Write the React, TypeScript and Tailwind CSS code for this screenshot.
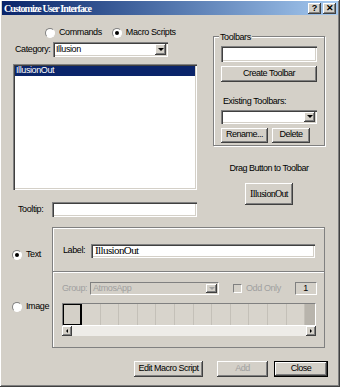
import type { ReactNode } from "react";

const FONT = { fontFamily: '"Liberation Sans", Arial, sans-serif' };
const SERIF = { fontFamily: '"Liberation Serif", "Times New Roman", serif' };

const sunken =
  "bg-white shadow-[inset_1px_1px_#808080,inset_2px_2px_#404040,inset_-1px_-1px_#ffffff,inset_-2px_-2px_#d4d0c8]";
const raised =
  "bg-[#d4d0c8] shadow-[inset_-1px_-1px_#404040,inset_1px_1px_#ffffff,inset_-2px_-2px_#808080]";

function Btn({
  children,
  className = "",
  disabled,
  isDefault,
}: {
  children: ReactNode;
  className?: string;
  disabled?: boolean;
  isDefault?: boolean;
}) {
  const inner = (
    <div
      className={`flex h-full w-full items-center justify-center whitespace-nowrap text-[9px] tracking-[-0.5px] ${raised} ${
        disabled ? "text-[#a0a0a0]" : "text-black"
      }`}
    >
      {children}
    </div>
  );
  if (isDefault) {
    return <div className={`border border-black ${className}`}>{inner}</div>;
  }
  return <div className={className}>{inner}</div>;
}

function Radio({ checked, label }: { checked?: boolean; label: string }) {
  return (
    <div className="flex items-center gap-[4px]">
      <div className="flex h-[10px] w-[10px] items-center justify-center rounded-full border border-[#808080] border-r-white border-b-white bg-white">
        {checked && <div className="h-[4px] w-[4px] rounded-full bg-black" />}
      </div>
      <span className="text-[9px] tracking-[-0.4px]">{label}</span>
    </div>
  );
}

function ComboArrow({ disabled }: { disabled?: boolean }) {
  return (
    <div className={`flex h-full w-[11px] items-center justify-center ${raised}`}>
      <div
        className={`h-0 w-0 border-x-[3px] border-t-[3px] border-x-transparent ${
          disabled ? "border-t-[#a0a0a0]" : "border-t-black"
        }`}
      />
    </div>
  );
}

function ScrollArrow({ dir }: { dir: "l" | "r" }) {
  return (
    <div className={`flex h-full w-[10px] items-center justify-center ${raised}`}>
      <div
        className={`h-0 w-0 border-y-[2px] border-y-transparent ${
          dir === "l" ? "border-r-[2px] border-r-black" : "border-l-[2px] border-l-black"
        }`}
      />
    </div>
  );
}

export default function App() {
  const cells = Array.from({ length: 12 });
  return (
    <div
      className="flex h-[387px] w-[340px] flex-col bg-[#d4d0c8] text-black shadow-[inset_-1px_-1px_#404040,inset_1px_1px_#ffffff,inset_-2px_-2px_#808080]"
      style={FONT}
    >
      {/* title bar */}
      <div className="mx-[2px] mt-[1px] flex h-[14px] items-center justify-between bg-gradient-to-r from-[#0a246a] to-[#a6caf0] pl-[2px] pr-[2px]">
        <span className="text-[10px] font-bold tracking-[-0.9px] text-white" style={SERIF}>
          Customize User Interface
        </span>
        <div className="flex gap-[2px]">
          <div className={`flex h-[11px] w-[13px] items-center justify-center text-[9px] font-bold leading-none ${raised}`}>
            ?
          </div>
          <div className={`flex h-[11px] w-[13px] items-center justify-center text-[9px] font-bold leading-none ${raised}`}>
            ✕
          </div>
        </div>
      </div>

      {/* top: two columns */}
      <div className="flex pl-[13px] pt-[12px]">
        <div className="flex w-[184px] flex-col">
          <div className="flex h-[12px] items-center gap-[10px] pl-[32px]">
            <Radio label="Commands" />
            <Radio checked label="Macro Scripts" />
          </div>
          <div className="mt-[3px] flex h-[15px] items-center">
            <span className="w-[40px] pl-[2px] text-[9px] tracking-[-0.4px]">Category:</span>
            <div className={`flex h-full w-[115px] items-center justify-between p-[2px] ${sunken}`}>
              <span className="pl-[1px] text-[9px] tracking-[-0.4px]">Illusion</span>
              <ComboArrow />
            </div>
          </div>
          <div className={`mt-[7px] h-[126px] p-[2px] ${sunken}`}>
            <div className="flex h-[10px] items-center bg-[#0a246a] pl-[1px] text-[9px] tracking-[-0.4px] text-white">
              IllusionOut
            </div>
          </div>
          <div className="mt-[12px] flex h-[15px] items-center">
            <span className="w-[39px] pl-[5px] text-[9px] tracking-[-0.4px]">Tooltip:</span>
            <div className={`h-full flex-1 ${sunken}`} />
          </div>
        </div>

        <div className="ml-[16px] flex w-[112px] flex-col">
          <div className="relative mt-[9px] h-[110px] border border-[#808080] shadow-[inset_1px_1px_#ffffff,1px_1px_#ffffff] px-[7px] pt-[9px]">
            <span className="absolute -top-[6px] left-[5px] bg-[#d4d0c8] px-[1px] text-[9px] tracking-[-0.4px]">
              Toolbars
            </span>
            <div className={`h-[16px] w-full ${sunken}`} />
            <Btn className="mt-[4px] h-[16px] w-full">Create Toolbar</Btn>
            <div className="mt-[13px] pl-[2px] text-[9px] tracking-[-0.4px]">Existing Toolbars:</div>
            <div className={`mt-[1px] flex h-[14px] w-full justify-end p-[2px] ${sunken}`}>
              <ComboArrow />
            </div>
            <div className="mt-[4px] flex gap-[4px]">
              <Btn className="h-[15px] w-[47px]">Rename...</Btn>
              <Btn className="h-[15px] w-[38px]">Delete</Btn>
            </div>
          </div>
          <div className="mt-[16px] text-center text-[9px] tracking-[-0.5px]">Drag Button to Toolbar</div>
          <Btn className="mx-auto mt-[7px] h-[22px] w-[48px]">
            <span className="text-[10px] tracking-[-0.7px]" style={SERIF}>
              IllusionOut
            </span>
          </Btn>
        </div>
      </div>

      {/* text / image sections */}
      <div className="mt-[10px] flex">
        <div className="flex w-[52px] flex-col">
          <div className="flex h-[45px] items-center pl-[12px] pt-[10px]">
            <Radio checked label="Text" />
          </div>
          <div className="flex h-[76px] items-center pl-[12px] pb-[6px]">
            <Radio label="Image" />
          </div>
        </div>
        <div className="flex w-[273px] flex-col">
          <div className="flex h-[45px] items-center border border-[#808080] shadow-[inset_1px_1px_#ffffff] pl-[10px] pt-[2px]">
            <span className="w-[28px] text-[9px] tracking-[-0.4px]">Label:</span>
            <div className={`flex h-[14px] w-[224px] items-center pl-[4px] ${sunken}`}>
              <span className="text-[11px] tracking-[-0.6px]" style={SERIF}>
                IllusionOut
              </span>
            </div>
          </div>
          <div className="flex h-[76px] flex-col border border-t-0 border-[#808080] shadow-[inset_1px_1px_#ffffff] pl-[9px] pt-[10px]">
            <div className="flex h-[13px] items-center">
              <span className="w-[28px] text-[9px] tracking-[-0.4px] text-[#a0a0a0]">Group:</span>
              <div className="flex h-full w-[129px] items-center justify-between border border-[#808080] border-r-white border-b-white bg-[#d4d0c8] p-[1px]">
                <span className="pl-[1px] text-[9px] tracking-[-0.4px] text-[#a0a0a0]">AtmosApp</span>
                <ComboArrow disabled />
              </div>
              <div className="ml-[14px] h-[9px] w-[9px] border border-[#808080] border-r-white border-b-white bg-[#d4d0c8]" />
              <span className="ml-[4px] text-[9px] tracking-[-0.4px] text-[#a0a0a0]">Odd Only</span>
              <div className="ml-[14px] flex h-full w-[22px] items-center justify-center border border-[#808080] border-r-white border-b-white text-[9px]">
                1
              </div>
            </div>
            <div className="mt-[8px] flex h-[23px] w-[254px] border border-[#808080] border-r-white border-b-white">
              <div className="h-full w-[19px] border border-black border-r-[2px]" />
              {cells.map((_, i) => (
                <div key={i} className="h-full w-[18.6px] border-r border-[#c4c0b8] bg-[#d8d4cc]" />
              ))}
              <div className="h-full flex-1 bg-[#b8b4ac]" />
            </div>
            <div className="flex h-[10px] w-[254px] bg-[#eeece8]">
              <ScrollArrow dir="l" />
              <div className="flex-1" />
              <ScrollArrow dir="r" />
            </div>
          </div>
        </div>
      </div>

      {/* bottom buttons */}
      <div className="mt-[13px] flex pl-[134px]">
        <Btn className="h-[16px] w-[69px]">Edit Macro Script</Btn>
        <Btn className="ml-[14px] h-[16px] w-[51px]" disabled>
          Add
        </Btn>
        <Btn className="ml-[6px] h-[16px] w-[54px]" isDefault>
          Close
        </Btn>
      </div>
    </div>
  );
}
